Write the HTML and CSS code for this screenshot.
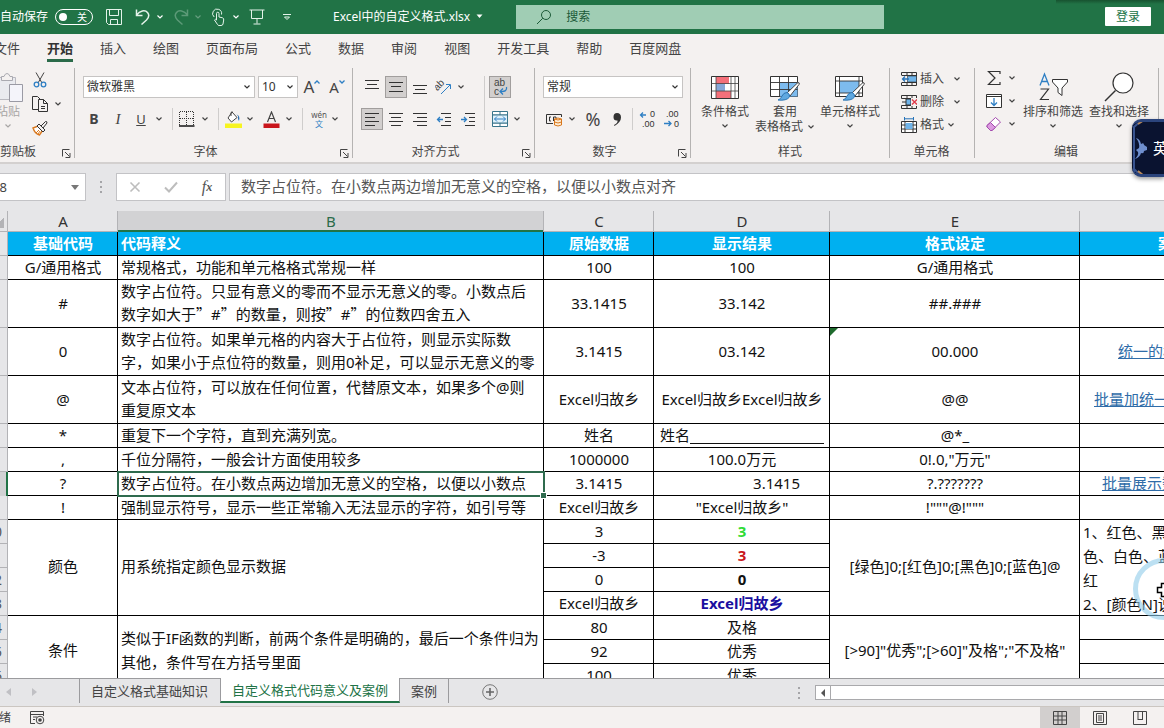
FILE: index.html
```html
<!DOCTYPE html>
<html lang="zh-CN">
<head>
<meta charset="utf-8">
<title>Excel中的自定义格式.xlsx</title>
<link rel="stylesheet" href="styles.css">
</head>
<body>
<svg class="defs" aria-hidden="true">
  <symbol id="chev" viewBox="0 0 8 8"><path d="M1.500 2.500 4 5l2.500-2.500" fill="none" stroke="currentColor" stroke-width="1.200"/></symbol>
  <symbol id="launch" viewBox="0 0 9 9"><path d="M.5 7.500V.5H7.500M3 3l4.500 4.500M8 4v4.500H3.500" fill="none" stroke="#444"/></symbol>
</svg>

<header class="titlebar">
  <label class="autosave">自动保存<input type="checkbox" class="hidden-check"><span class="toggle"><i></i>关</span></label>
  <button class="tb w22" aria-label="保存"><svg width="18" height="18" viewBox="0 0 18 18"><path d="M1.500 1.500h15v15h-13l-2-2zM4.500 1.500v6h9v-6M5.500 16.500v-5h7v5" /></svg></button>
  <button class="tb w36" aria-label="撤消"><svg width="16" height="18" viewBox="0 0 16 18"><path stroke-width="1.500" d="M1.500 1.500v6h6M1.500 7C5 2.500 10 1.500 12.500 4.500s1.500 5-1 7.500l-5 4.500"/></svg><svg class="chev"><use href="#chev"/></svg></button>
  <button class="tb w36 dim" aria-label="恢复"><svg width="16" height="18" viewBox="0 0 16 18"><path stroke-width="1.500" d="M14.500 1.500v6h-6M14.500 7C11 2.500 6 1.500 3.500 4.500s-1.500 5 1 7.500l5 4.500"/></svg><svg class="chev"><use href="#chev"/></svg></button>
  <button class="tb w36" aria-label="触摸模式"><svg width="16" height="18" viewBox="0 0 16 18"><path d="M3.200 9A4.500 4.500 0 1 1 10.500 6.500M5.500 12V5.500a1.200 1.200 0 0 1 2.500 0V9l3.500.8q1.500.4 1.200 2.200l-.7 4q-.3 1.500-2 1.500H8q-1 0-1.500-1L3.500 12q1-1.500 2 0z"/></svg><svg class="chev"><use href="#chev"/></svg></button>
  <button class="tb w22" aria-label="放映"><svg width="16" height="18" viewBox="0 0 16 18"><path d="M.5 2h15M2.500 2v8.500h11V2M8 10.500v5M4.500 16h7"/></svg></button>
  <button class="tb w30" aria-label="自定义工具栏"><svg width="10" height="8" viewBox="0 0 10 8"><path d="M1 1.500h8M2.500 4 5 6.500 7.500 4z"/></svg></button>
  <button class="doc">Excel中的自定义格式.xlsx<svg width="7" height="5" viewBox="0 0 7 5"><path d="M.5.500h6l-3 3.500z" fill="#fff"/></svg></button>
  <label class="search"><svg width="16" height="16" viewBox="0 0 16 16"><circle cx="10" cy="6" r="4.500" fill="none" stroke="#1c5a38"/><path d="M6.800 9.200 1 15" stroke="#1c5a38"/></svg><input type="text" placeholder="搜索" aria-label="搜索"></label>
  <button class="login">登录</button>
</header>

<nav class="tabs">
  <a href="#">文件</a><a href="#" class="on">开始</a><a href="#">插入</a><a href="#">绘图</a><a href="#">页面布局</a><a href="#">公式</a><a href="#">数据</a><a href="#">审阅</a><a href="#">视图</a><a href="#">开发工具</a><a href="#">帮助</a><a href="#">百度网盘</a>
</nav>

<section class="ribbon">
  <div class="group g-clip">
    <div class="body">
      <button class="big paste"><svg width="30" height="30" viewBox="0 0 30 30"><path d="M22.500 12V5.500h-19v22h13" fill="#e9eaef" stroke="#b9b9c0"/><path d="M8.500 8.500v-4H11q1-3 3-3t3 3h2.500v4z" fill="#f4f1f0" stroke="#a9a9b0"/><path d="M16.500 12.500h13v17h-13z" fill="#f4f4fa" stroke="#9a9aa4"/></svg><span>粘贴</span><svg class="chev"><use href="#chev"/></svg></button>
      <div class="stack">
        <button aria-label="剪切"><svg width="16" height="18" viewBox="0 0 16 18"><path d="M4 1.500 10 12M12 1.500 6 12" fill="none" stroke="#444"/><circle cx="4.500" cy="13.500" r="2.300" fill="none" stroke="#2e7fc4" stroke-width="1.300"/><circle cx="11.500" cy="13.500" r="2.300" fill="none" stroke="#2e7fc4" stroke-width="1.300"/></svg></button>
        <button aria-label="复制"><svg width="16" height="18" viewBox="0 0 16 18"><path d="M6 14.500H.5v-13h5L8 4M6.500 4.500h5l4 4v8h-9zM11.500 4.500v4h4M9 11.500h4M9 13.500h4" fill="none" stroke="#333"/></svg><svg class="chev"><use href="#chev"/></svg></button>
        <button aria-label="格式刷"><svg width="16" height="16" viewBox="0 0 16 16"><path d="m1 8 5-2 4.500 4.500-3 4.500Q3 14 1 8z" fill="#fff" stroke="#d9781e" stroke-width="1.400"/><path d="M4 13l3-3M6 14l2-3" stroke="#d9781e"/><path d="m5 6 2-2 6 6-2 2zM9 6l4.500-4.500q1.500-.5 1.500 1.500L11 8" fill="#f4f1f0" stroke="#333"/></svg></button>
      </div>
    </div>
    <div class="cap">剪贴板<svg class="launch"><use href="#launch"/></svg></div>
  </div>

  <div class="group g-font">
    <div class="body rows">
      <div class="row">
        <div class="combo wide"><select aria-label="字体"><option>微软雅黑</option></select><svg class="chev"><use href="#chev"/></svg></div>
        <div class="combo size"><select aria-label="字号"><option>10</option></select><svg class="chev"><use href="#chev"/></svg></div>
        <button class="w22 grow">A<svg width="6" height="4" viewBox="0 0 6 4"><path d="M.5 3.500 3 1l2.500 2.500" fill="none" stroke="#2e7fc4" stroke-width="1.300"/></svg></button>
        <button class="w22 grow small">A<svg width="6" height="4" viewBox="0 0 6 4"><path d="M.5.500 3 3 5.500.500" fill="none" stroke="#2e7fc4" stroke-width="1.300"/></svg></button>
      </div>
      <div class="row tight">
        <button class="w22 b">B</button><button class="w26 i">I</button><button class="w20 u">U</button><button class="w16" aria-label="下划线选项"><svg class="chev"><use href="#chev"/></svg></button>
        <span class="sep w10"></span>
        <button class="w20" aria-label="边框"><svg width="16" height="16" viewBox="0 0 16 16"><path d="M1 .5h14M1 7.500h14M.5 1v13M7.500 1v13M14.500 1v13" stroke="#333" stroke-dasharray="1 1"/><path d="M0 15h15.500" stroke="#222" stroke-width="1.600"/></svg></button><button class="w16" aria-label="边框选项"><svg class="chev"><use href="#chev"/></svg></button>
        <span class="sep w10"></span>
        <button class="w20" aria-label="填充颜色"><svg width="17" height="17" viewBox="0 0 17 17"><path d="m7 1 5 5.500-5.500 4.500-3.500-4z" fill="#fff" stroke="#444"/><path d="M6 5V1.500q1-1.500 2 0" fill="none" stroke="#444"/><path d="M11.500 3.500q4 1 2.500 6.500-1.500-2-1-5z" fill="#2e6fb0"/><path d="M0 12.500h17V17H0z" fill="#f7f420"/></svg></button><button class="w14" aria-label="填充选项"><svg class="chev"><use href="#chev"/></svg></button>
        <button class="w28" aria-label="字体颜色"><svg width="17" height="17" viewBox="0 0 17 17"><path d="M4.500 11 8.500 1 12.500 11M6 7.500h5" fill="none" stroke="#444" stroke-width="1.200"/><path d="M.5 12.500h16V17H.5z" fill="#c9151b"/></svg></button><button class="w8" aria-label="字体颜色选项"><svg class="chev"><use href="#chev"/></svg></button>
        <span class="sep w18"></span>
        <button class="w16 pinyin"><span>wén</span><b>文</b></button><button class="w16" aria-label="拼音选项"><svg class="chev"><use href="#chev"/></svg></button>
      </div>
    </div>
    <div class="cap">字体<svg class="launch"><use href="#launch"/></svg></div>
  </div>

  <div class="group g-align">
    <div class="body align">
      <button aria-label="顶端对齐"><svg width="16" height="16" viewBox="0 0 16 16"><path d="M1 1.500h14M3 5.500h10M1 9.500h14" stroke="#333"/></svg></button>
      <button class="sel" aria-label="垂直居中"><svg width="16" height="16" viewBox="0 0 16 16"><path d="M1 3.500h14M3 7.500h10M1 12.500h14" stroke="#333"/></svg></button>
      <button aria-label="底端对齐"><svg width="16" height="16" viewBox="0 0 16 16"><path d="M1 6.500h14M3 10.500h10M1 14.500h14" stroke="#333"/></svg></button>
      <button aria-label="方向"><svg width="18" height="18" viewBox="0 0 18 18"><text x="0" y="10" class="ab" transform="rotate(-45 5 9)">ab</text><path d="m6 16 9-9M11 6.500h4.500V11" fill="none" stroke="#2e7fc4"/></svg></button>
      <button class="start" aria-label="方向选项"><svg class="chev"><use href="#chev"/></svg></button>
      <span class="sep tall"></span>
      <button class="sel" aria-label="自动换行"><svg width="18" height="20" viewBox="0 0 18 20"><text x="3" y="9" class="ab">ab</text><text x="3" y="18" class="ab">c</text><path d="M15.500 10q1 5-6 4.500M12 11.500l-3 3 3 3" fill="none" stroke="#2e7fc4" stroke-width="1.300"/></svg></button>
      <span></span>
      <button class="sel" aria-label="左对齐"><svg width="16" height="16" viewBox="0 0 16 16"><path d="M1 2.500h14M1 6.500h10M1 10.500h14M1 14.500h10" stroke="#333"/></svg></button>
      <button aria-label="居中"><svg width="16" height="16" viewBox="0 0 16 16"><path d="M1 2.500h14M3 6.500h10M1 10.500h14M3 14.500h10" stroke="#333"/></svg></button>
      <button aria-label="右对齐"><svg width="16" height="16" viewBox="0 0 16 16"><path d="M1 2.500h14M5 6.500h10M1 10.500h14M5 14.500h10" stroke="#333"/></svg></button>
      <button aria-label="减少缩进"><svg width="16" height="16" viewBox="0 0 16 16"><path d="M5 2.500h10M9 6.500h6M9 10.500h6M5 14.500h10" stroke="#333"/><path d="M7 8.500H1.500M4 6 1.500 8.500 4 11" fill="none" stroke="#2e7fc4" stroke-width="1.300"/></svg></button>
      <button aria-label="增加缩进"><svg width="16" height="16" viewBox="0 0 16 16"><path d="M5 2.500h10M9 6.500h6M9 10.500h6M5 14.500h10" stroke="#333"/><path d="M1 8.500h5.500M4 6l2.500 2.500L4 11" fill="none" stroke="#2e7fc4" stroke-width="1.300"/></svg></button>
      <button aria-label="合并后居中"><svg width="16" height="16" viewBox="0 0 16 16"><path d="M.5.500h15v15H.5zM.5 4h15M.5 12h15M8 .5V4M8 12v3.500" fill="#fff" stroke="#39758c"/><path d="M.5 4h15v8H.5z" fill="#dff1fb" stroke="#39758c"/><path d="M2.500 8h11M5 5.500 2.500 8 5 10.500M11 5.500 13.500 8 11 10.500" fill="none" stroke="#2e7fc4"/></svg></button>
      <button class="start" aria-label="合并选项"><svg class="chev"><use href="#chev"/></svg></button>
    </div>
    <div class="cap">对齐方式<svg class="launch"><use href="#launch"/></svg></div>
  </div>

  <div class="group g-num">
    <div class="body rows">
      <div class="row"><div class="combo full"><select aria-label="数字格式"><option>常规</option></select><svg class="chev"><use href="#chev"/></svg></div></div>
      <div class="row tight">
        <button class="w22" aria-label="会计数字格式"><svg width="16" height="16" viewBox="0 0 16 16"><path d="M7 12.500H.5v-9h15V6" fill="none" stroke="#333"/><path d="M5 6H3.500v4H5M7.500 10V6H10v1" fill="none" stroke="#333"/><path d="M8.500 8v6q3.500 2 7 0V8q-3.500-2-7 0zM8.500 8q3.500 2 7 0M8.500 11q3.500 2 7 0" fill="#fdebd3" stroke="#d9781e"/></svg></button><button class="w14" aria-label="会计选项"><svg class="chev"><use href="#chev"/></svg></button>
        <button class="w28 pct">%</button>
        <button class="w20" aria-label="千位分隔"><svg width="8" height="13" viewBox="0 0 8 13"><path d="M4 0q4 0 4 4.500T1.500 13L1 12q4-2 3.500-4.500Q.5 8 .5 4T4 0z" fill="#333"/></svg></button>
        <span class="sep w10"></span>
        <button class="w22" aria-label="增加小数位"><svg width="18" height="20" viewBox="0 0 18 20"><path d="M7 6H1.500M4 3.500 1.500 6 4 8.500" fill="none" stroke="#2e7fc4" stroke-width="1.300"/><text x="11" y="8" class="dec">0</text><text x="3" y="18" class="dec">.00</text></svg></button>
        <button class="w26" aria-label="减少小数位"><svg width="18" height="20" viewBox="0 0 18 20"><text x="3" y="8" class="dec">.00</text><path d="M1 14.500h7M5.500 12 8 14.500 5.500 17" fill="none" stroke="#2e7fc4" stroke-width="1.300"/><text x="11" y="18" class="dec">0</text></svg></button>
      </div>
    </div>
    <div class="cap">数字<svg class="launch"><use href="#launch"/></svg></div>
  </div>

  <div class="group g-style">
    <div class="body">
      <button class="big w60"><svg width="30" height="28" viewBox="0 0 30 28"><path d="M1.500 3.500h27v22h-27z" fill="#fff" stroke="#333"/><path d="M6 4h13v7H6zM6 18h15v7H6z" fill="#f4707a"/><path d="M6 11h9v7H6z" fill="#86a7d8"/><path d="M1.500 10.500h27M1.500 18h27M6 3.500v22M21 3.500v22M25 3.500v22" stroke="#444" stroke-width=".8"/></svg><span>条件格式</span><svg class="chev"><use href="#chev"/></svg></button>
      <button class="big w60"><svg width="32" height="28" viewBox="0 0 32 28"><path d="M1.500 3.500h27v20h-27z" fill="#fff" stroke="#333"/><path d="M11 9h17.500v14.500H11z" fill="#7dbbee"/><path d="M1.500 9.500h27M1.500 16.500h27M10.500 3.500v20M19.500 3.500v20" stroke="#333" stroke-width=".9"/><path d="M29 9.500q2 0 1 2L21 23l-3-3z" fill="#fff" stroke="#444"/><path d="M18 19.500q3 1 2.500 4.500-3 4-11.500 3 3-1 4-4 1.500-3.500 5-3.500z" fill="#5fa8e0" stroke="#2d76b4"/></svg><span>套用</span><span class="ln">表格格式<svg class="chev"><use href="#chev"/></svg></span></button>
      <button class="big w70"><svg width="32" height="28" viewBox="0 0 32 28"><path d="M1.500 3.500h27v20h-27z" fill="#fff" stroke="#333"/><path d="M6 8h19v12H6z" fill="#7dbbee"/><path d="M1.500 8h27M1.500 20h27M5.500 3.500v20M25 3.500v20" stroke="#333" stroke-width=".9"/><path d="M29 9.500q2 0 1 2L21 23l-3-3z" fill="#fff" stroke="#444"/><path d="M18 19.500q3 1 2.500 4.500-3 4-11.500 3 3-1 4-4 1.500-3.500 5-3.500z" fill="#5fa8e0" stroke="#2d76b4"/></svg><span>单元格样式</span><svg class="chev"><use href="#chev"/></svg></button>
    </div>
    <div class="cap">样式</div>
  </div>

  <div class="group g-cell">
    <div class="body list">
      <button><svg width="16" height="16" viewBox="0 0 16 16"><path d="M.5 4V1.500h15v13H.5V12M6 1.500V5M11 1.500v13M6 11v3.500M.5 11.500h15M.5 4.500h15" fill="none" stroke="#333"/><path d="M6.500 5h9v6h-9z" fill="#6fb4ea" stroke="#333" stroke-width=".6"/><path d="M0 5h6v6H0z" fill="#f4f1f0"/><path d="M8 8H1.500M4 5.500 1.500 8 4 10.500" fill="none" stroke="#2673b8" stroke-width="1.300"/></svg><span>插入</span><svg class="chev far"><use href="#chev"/></svg></button>
      <button><svg width="16" height="16" viewBox="0 0 16 16"><path d="M.5 4.500v-3h15v3H.5zM.5 14.500v-3h15v3zM6 1.500v13M11 1.500v3M11 11.500v3" fill="none" stroke="#333"/><path d="M5 5h5v6H5z" fill="#6fb4ea" stroke="#333"/><path d="M10 4h6v8h-6z" fill="#f4f1f0"/><path d="m11 5.500 5 5M16 5.500l-5 5" stroke="#e03a4a" stroke-width="1.400"/><path d="M1 8h4" stroke="#333"/></svg><span>删除</span><svg class="chev far"><use href="#chev"/></svg></button>
      <button><svg width="16" height="16" viewBox="0 0 16 16"><path d="M.5 4.500h15v11H.5zM4 4.500v11M12 4.500v11M.5 8h15M.5 12h15" fill="#fff" stroke="#333"/><path d="M4.500 6h7v6h-7z" fill="#6fb4ea"/><path d="M3.500 0v3.500M12.500 0v3.500M3.500 1.800h9" fill="none" stroke="#2673b8"/></svg><span>格式</span><svg class="chev"><use href="#chev"/></svg></button>
    </div>
    <div class="cap">单元格</div>
  </div>

  <div class="group g-edit">
    <div class="body">
      <div class="list short">
        <button aria-label="求和"><svg width="16" height="16" viewBox="0 0 16 16"><path d="M14 4V1.500H2.500L9 8l-6.500 6.500H14V12" fill="none" stroke="#333" stroke-width="1.200"/></svg><svg class="chev"><use href="#chev"/></svg></button>
        <button aria-label="填充"><svg width="16" height="16" viewBox="0 0 16 16"><path d="M.5 1.500h15v13H.5zM.5 3.500h15" fill="#fff" stroke="#333"/><path d="M8 5v7.500M5 9.500l3 3 3-3" fill="none" stroke="#2e7fc4" stroke-width="1.300"/></svg><svg class="chev"><use href="#chev"/></svg></button>
        <button aria-label="清除"><svg width="16" height="16" viewBox="0 0 16 16"><path d="M9.500 1.500 14.500 6 6 14.500H4.500L1 11V9.500z" fill="#fff" stroke="#a34aae"/><path d="m4.500 6.500 5 5-3.500 3H4.500L1 11V9.500z" fill="#dc9be0" stroke="#a34aae"/></svg><svg class="chev"><use href="#chev"/></svg></button>
      </div>
      <button class="big w66"><svg width="32" height="30" viewBox="0 0 32 30"><path d="M3 13.500 7.500 2 12 13.500M4.500 9.500h6" fill="none" stroke="#2e7fc4" stroke-width="1.300"/><path d="M3.500 17h8l-8 10.500H12" fill="none" stroke="#333" stroke-width="1.200"/><path d="M15.500 7.500h15V10l-5.500 6v7.500l-4-3V16l-5.500-6z" fill="#fff" stroke="#333"/></svg><span>排序和筛选</span><svg class="chev"><use href="#chev"/></svg></button>
      <button class="big w66"><svg width="32" height="30" viewBox="0 0 32 30"><circle cx="20" cy="11" r="10" fill="#fff" stroke="#333" stroke-width="1.200"/><path d="M12.500 18.500 2 29" stroke="#333" stroke-width="1.400"/></svg><span>查找和选择</span><svg class="chev"><use href="#chev"/></svg></button>
    </div>
    <div class="cap">编辑</div>
  </div>
</section>

<section class="formula">
  <label class="namebox"><input type="text" value="B8" aria-label="名称框"><svg width="8" height="5" viewBox="0 0 8 5"><path d="M0 0h8L4 5z" fill="#777"/></svg></label>
  <span class="dots"><i></i><i></i><i></i></span>
  <div class="fx">
    <button aria-label="取消"><svg width="12" height="12" viewBox="0 0 12 12"><path d="m1.500 1.500 9 9M10.500 1.500l-9 9" stroke="#bdbdbd" stroke-width="1.600"/></svg></button>
    <button aria-label="输入"><svg width="14" height="12" viewBox="0 0 14 12"><path d="m1 6.500 4 4 8-9" fill="none" stroke="#bdbdbd" stroke-width="2"/></svg></button>
    <button class="fxb"><em>f</em><small>x</small></button>
  </div>
  <input class="finput" type="text" aria-label="编辑栏" value="数字占位符。在小数点两边增加无意义的空格，以便以小数点对齐">
</section>

<main class="sheet">
  <table>
    <colgroup><col class="c0"><col class="ca"><col class="cb"><col class="cc"><col class="cd"><col class="ce"><col></colgroup>
    <thead><tr><th class="corner"></th><th>A</th><th class="cur">B</th><th>C</th><th>D</th><th>E</th><th></th></tr></thead>
    <tbody>
      <tr class="hd"><th>1</th><td>基础代码</td><td class="l">代码释义</td><td>原始数据</td><td>显示结果</td><td>格式设定</td><td class="f f-hd">案例展示</td></tr>
      <tr><th>2</th><td>G/通用格式</td><td class="l">常规格式，功能和单元格格式常规一样</td><td>100</td><td>100</td><td>G/通用格式</td><td></td></tr>
      <tr class="two"><th>3</th><td>#</td><td class="l">数字占位符。只显有意义的零而不显示无意义的零。小数点后<br>数字如大于<q>”</q>#<q>”</q>的数量，则按<q>”</q>#<q>”</q>的位数四舍五入</td><td>33.1415</td><td>33.142</td><td>##.###</td><td></td></tr>
      <tr class="two"><th>4</th><td>0</td><td class="l">数字占位符。如果单元格的内容大于占位符，则显示实际数<br>字，如果小于点位符的数量，则用0补足，可以显示无意义的零</td><td>3.1415</td><td>03.142</td><td class="warn">00.000</td><td class="f f-a"><a href="#">统一的格式</a></td></tr>
      <tr class="two"><th>5</th><td>@</td><td class="l">文本占位符，可以放在任何位置，代替原文本，如果多个@则<br>重复原文本</td><td>Excel归故乡</td><td>Excel归故乡Excel归故乡</td><td>@@</td><td class="f f-b"><a href="#">批量加统一前缀</a></td></tr>
      <tr><th>6</th><td>*</td><td class="l">重复下一个字符，直到充满列宽。</td><td>姓名</td><td class="fill"><div>姓名<span></span></div></td><td>@*_</td><td></td></tr>
      <tr><th>7</th><td>,</td><td class="l">千位分隔符，一般会计方面使用较多</td><td>1000000</td><td>100.0万元</td><td>0!.0,"万元"</td><td></td></tr>
      <tr><th class="cur">8</th><td>?</td><td class="l active">数字占位符。在小数点两边增加无意义的空格，以便以小数点</td><td>3.1415</td><td class="r">3.1415</td><td>?.???????</td><td class="f f-c"><a href="#">批量展示数据</a></td></tr>
      <tr><th>9</th><td>!</td><td class="l">强制显示符号，显示一些正常输入无法显示的字符，如引号等</td><td>Excel归故乡</td><td>"Excel归故乡"</td><td>!"""@!"""</td><td></td></tr>
      <tr><th>10</th><td class="span" rowspan="4">颜色</td><td class="l span" rowspan="4">用系统指定颜色显示数据</td><td>3</td><td class="green">3</td><td class="span" rowspan="4">[绿色]0;[红色]0;[黑色]0;[蓝色]@</td><td class="f note" rowspan="4">1、红色、黑色、<br>色、白色、蓝色<br>红<br>2、[颜色N]说明</td></tr>
      <tr><th>11</th><td>-3</td><td class="red">3</td></tr>
      <tr><th>12</th><td>0</td><td class="bold">0</td></tr>
      <tr><th>13</th><td>Excel归故乡</td><td class="blue">Excel归故乡</td></tr>
      <tr><th>14</th><td class="span" rowspan="3">条件</td><td class="l span" rowspan="3">类似于IF函数的判断，前两个条件是明确的，最后一个条件归为<br>其他，条件写在方括号里面</td><td>80</td><td>及格</td><td class="span" rowspan="3">[&gt;90]"优秀";[&gt;60]"及格";"不及格"</td><td></td></tr>
      <tr><th>15</th><td>92</td><td>优秀</td><td></td></tr>
      <tr><th>16</th><td>100</td><td>优秀</td><td></td></tr>
    </tbody>
  </table>
</main>

<nav class="sheetbar">
  <button class="arrow" aria-label="上一张"><svg width="5" height="8" viewBox="0 0 5 8"><path d="M5 0v8L0 4z" fill="#c0c0c4"/></svg></button>
  <button class="arrow" aria-label="下一张"><svg width="5" height="8" viewBox="0 0 5 8"><path d="M0 0v8l5-4z" fill="#c0c0c4"/></svg></button>
  <button class="st first">自定义格式基础知识</button><button class="st act">自定义格式代码意义及案例</button><button class="st last">案例</button>
  <button class="plus" aria-label="新工作表"><svg width="16" height="16" viewBox="0 0 16 16"><circle cx="8" cy="8" r="7.300" fill="none" stroke="#777"/><path d="M8 4v8M4 8h8" stroke="#666" stroke-width="1.600"/></svg></button>
  <span class="dots"><i></i><i></i><i></i></span>
  <div class="scroll"><button aria-label="向左滚动"><svg width="4" height="8" viewBox="0 0 4 8"><path d="M4 0v8L0 4z" fill="#555"/></svg></button></div>
</nav>

<footer class="status">
  <span class="ready">就绪</span>
  <button class="rec" aria-label="录制宏"><svg width="15" height="14" viewBox="0 0 15 14"><path d="M5 12.500H.5V.5h13V5M.5 3.500h13M3 6h4M3 8.500h2" fill="none" stroke="#444"/><circle cx="10" cy="9" r="3.800" fill="#f4f1f0" stroke="#444"/><circle cx="10" cy="9" r="1.800" fill="#444"/></svg></button>
  <div class="views">
    <button class="on" aria-label="普通"><svg width="14" height="14" viewBox="0 0 14 14"><path d="M.5.500h13v13H.5zM.5 5h13M.5 9h13M5 .5v13M9 .5v13" fill="none" stroke="#444"/></svg></button>
    <button aria-label="页面布局"><svg width="14" height="14" viewBox="0 0 14 14"><path d="M.5.500h13v13H.5zM3.500 2.500h7v9h-7zM5 5h4M5 7h4M5 9h4" fill="none" stroke="#444"/></svg></button>
    <button class="pb" aria-label="分页预览"><svg width="14" height="14" viewBox="0 0 14 14"><path d="M.5.500h13v13H.5zM5 .5v8.500M9.500 .5v8.500M5 8.500h4.500" fill="none" stroke="#444"/></svg></button>
  </div>
</footer>

<div class="ime"><svg width="16" height="58" viewBox="0 0 16 58"><path d="M2 54V8l8-7M2 50l7 7" fill="none" stroke="#38538f" stroke-width="2"/><path d="M4 19q4 1 5 6 3-2 3 1l3 2v3l-3 1q0 3-3 2-1 4-6 6 4-4 3-7l-2-2 3-2q1-5-3-10z" fill="#6f8fce"/><path d="m6 5 6-4M6 52l6 5" stroke="#b98a5a" stroke-width="2"/></svg><span>英</span></div>
<div class="ring"></div>
<svg class="cross" width="16" height="16" viewBox="0 0 16 16"><path d="M5.500 1.500h5v4h4v5h-4v4h-5v-4h-4v-5h4z" fill="#fff" stroke="#000" stroke-width="1.500"/></svg>
</body>
</html>
```
FILE: styles.css
```css
* { box-sizing: border-box; }
body {
  margin: 0;
  height: 100vh;
  display: flex;
  flex-direction: column;
  position: relative;
  overflow: hidden;
  background: #f4f1f0;
  color: #444;
  font: 12px/16px "Noto Sans", "Noto Sans CJK SC", sans-serif;
}
button, input, select { font: inherit; color: inherit; border: 0; padding: 0; margin: 0; background: none; }
button { display: flex; align-items: center; justify-content: center; white-space: nowrap; }
a { color: inherit; text-decoration: none; }
svg { display: block; flex: none; }
.defs { position: absolute; width: 0; height: 0; }
.chev { width: 8px; height: 8px; }
.w8 { width: 8px; } .w10 { width: 10px; } .w14 { width: 14px; } .w16 { width: 16px; } .w18 { width: 18px; }
.w20 { width: 20px; } .w22 { width: 22px; } .w26 { width: 26px; } .w28 { width: 28px; } .w30 { width: 30px; }
.w36 { width: 36px; } .w60 { width: 60px; } .w66 { width: 66px; } .w70 { width: 70px; }

/* title bar */
.titlebar { height: 34px; flex: none; display: flex; align-items: center; padding-bottom: 1px; background: linear-gradient(#175230, #217346) right top / 108px 4px no-repeat #217346; color: #fff; }
.autosave { display: flex; align-items: center; gap: 7px; margin-right: 10px; }
.hidden-check { position: absolute; opacity: 0; }
.toggle { width: 38px; height: 16px; border: 1px solid #fff; border-radius: 8px; display: flex; align-items: center; justify-content: space-between; padding: 0 5px 0 3px; font-size: 10px; }
.toggle i { width: 8px; height: 8px; border-radius: 50%; background: #fff; }
.tb { height: 24px; }
.tb path { fill: none; stroke: #e4f3ea; }
.tb.w22 + .tb.w36 { margin-left: 10px; }
.tb.w36 { justify-content: flex-start; gap: 5px; margin-right: 2px; }
.tb.w36 + .tb.w22 { margin-left: -3px; }
.tb.w30 { margin-left: 4px; }
.dim { opacity: .3; }
.doc { gap: 6px; margin-left: 31px; }
.search { flex: 0 1 368px; height: 24px; margin-left: 33px; padding-left: 20px; display: flex; align-items: center; gap: 14px; background: #a0cdb4; color: #1c5a38; }
.search input { flex: 1; min-width: 0; outline: 0; }
.search input::placeholder { color: #1c5a38; opacity: 1; }
.login { margin: 0 13px 0 auto; width: 46px; height: 19px; background: #fff; color: #217346; border-radius: 1px; }

/* ribbon tabs */
.tabs { flex: none; display: flex; gap: 27px; margin-left: -6px; height: 32px; font-size: 13px; line-height: 20px; padding-top: 4px; white-space: nowrap; }
.tabs a { height: 24px; }
.tabs .on { font-weight: 700; color: #333; border-bottom: 3px solid #2b6b4a; }

/* ribbon groups */
.ribbon { flex: none; display: flex; height: 98px; padding: 2px 0 4px; border-bottom: 2px solid #d3d0cf; }
.group { display: flex; flex-direction: column; border-right: 1px solid #b5b3b2; flex: none; }
.g-clip { width: 75px; }
.g-font { width: 278px; padding-left: 8px; }
.g-align { width: 182px; padding-left: 8px; }
.g-num { width: 156px; padding-left: 8px; }
.g-style { width: 199px; padding-left: 4px; }
.g-cell { width: 85px; padding-left: 11px; }
.g-edit { width: 184px; padding-left: 11px; }
.body { flex: 1; display: flex; }
.cap { position: relative; height: 18px; line-height: 24px; padding-right: 12px; text-align: center; flex: none; }
.g-font .cap, .g-align .cap, .g-num .cap { padding-right: 24px; }
.g-style .cap { padding-right: 4px; }
.g-clip .cap { text-align: left; }
.launch { position: absolute; right: 3px; bottom: 0; width: 9px; height: 9px; }
.rows { flex-direction: column; gap: 10px; padding-top: 8px; }
.row { display: flex; align-items: center; height: 22px; gap: 3px; }
.row.tight { gap: 0; }
.row.tight button { height: 22px; }
.combo { display: flex; align-items: center; height: 22px; border: 1px solid #c6c4c3; background: #fff; padding: 0 3px 0 3px; color: #333; }
.combo select { flex: 1; min-width: 0; appearance: none; height: 20px; }
.combo.wide { width: 172px; } .combo.size { width: 40px; } .combo.full { width: 140px; }
.sep { align-self: stretch; background: linear-gradient(#cfcdcc, #cfcdcc) center / 1px 100% no-repeat; }
.grow { font-size: 17px; align-items: flex-start; line-height: 22px; }
.grow svg { margin-top: 4px; }
.grow.small { font-size: 15px; }
.b { font-weight: 700; font-size: 14px; }
.i { font: italic 15px "Liberation Serif", serif; }
.u { text-decoration: underline; font-size: 13px; }
.pinyin { flex-direction: column; font-size: 8px; line-height: 9px; color: #555; }
.pinyin b { font-weight: 400; color: #2e7fc4; }
.pct { font-size: 18px; }
.ab { font: 10px "Liberation Sans", sans-serif; fill: #444; }
.dec { font: 9px "Liberation Sans", sans-serif; fill: #333; }
.align { display: grid; grid-template-columns: 22px 22px 22px 22px 22px 6px 22px 12px; grid-auto-rows: 22px; gap: 10px 2px; padding-top: 8px; }
.align .start { justify-content: flex-start; }
.tall { grid-area: 1 / 6 / 3 / 7; }
.sel { background: #d2cfce; border: 1px solid #a19e9d; }
.big { flex-direction: column; justify-content: flex-start; padding-top: 4px; line-height: 15px; }
.big > svg:first-child { height: 30px; margin-bottom: 2px; }
.big > .chev { margin-top: 3px; }
.ln { display: flex; align-items: center; gap: 4px; }
.paste { width: 30px; margin-left: -7px; color: #a8a6a5; }
.stack { display: flex; flex-direction: column; padding: 2px 0 0 9px; gap: 4px; }
.stack button { height: 20px; gap: 6px; justify-content: flex-start; }
.list { display: flex; flex-direction: column; gap: 3px; padding-top: 1px; }
.list button { height: 20px; gap: 3px; justify-content: flex-start; }
.far { margin-left: 6px; }
.short { width: 34px; padding-top: 0; }
.short button { gap: 6px; }

/* formula bar */
.formula { flex: none; display: flex; height: 47px; padding: 9px 0 10px; background: #e6e6e8; }
.namebox { width: 86px; border: 1px solid #c3c3c6; border-left: 0; background: #fff; display: flex; align-items: center; padding-right: 6px; }
.namebox input { flex: 1; min-width: 0; margin-left: -9px; font-size: 13px; }
.dots { width: 30px; display: flex; flex-direction: column; align-items: center; justify-content: center; gap: 3px; }
.dots i { width: 2px; height: 2px; background: #a5a5a8; }
.fx { width: 110px; border: 1px solid #c3c3c6; background: #fff; display: flex; margin-right: 3px; }
.fx button { flex: 1; }
.fxb { color: #555; }
.fxb em { font: italic 16px "Liberation Serif", serif; }
.fxb small { font: italic 700 12px "Liberation Serif", serif; }
.finput { flex: 1; min-width: 0; border: 1px solid #c3c3c6; border-right: 0; background: #fff; padding: 0 0 2px 11px; font-size: 15px; color: #555; }

/* grid */
.sheet { flex: 1; min-height: 0; overflow: hidden; background: #fff; }
table { table-layout: fixed; width: calc(100% + 30px); margin-left: -20px; border-collapse: separate; border-spacing: 0; font-size: 15px; line-height: 22px; color: #111; }
.c0 { width: 28px; } .ca, .cc { width: 110px; } .cb { width: 426px; } .cd { width: 176px; } .ce { width: 250px; }
th { font-weight: 400; padding: 0; background: #e6e6e8; }
thead th { height: 21px; line-height: 21px; color: #333; box-shadow: inset -1px -1px 0 #b3b3b6; }
thead .cur { background: #d2d2d4; color: #2b6b4a; box-shadow: inset -1px 0 0 #b3b3b6, inset 0 -2px 0 #217346; }
.corner { background: linear-gradient(135deg, transparent 50%, #b3b3b6 50%) 13px 6px / 11px 11px no-repeat #e6e6e8; }
tbody th { font-size: 14px; color: #555; box-shadow: inset -1px -1px 0 #b3b3b6; }
tbody th.cur { background: #d2d2d4; box-shadow: inset -2px 0 0 #217346; }
td { position: relative; height: 24px; padding: 0 0 2px; text-align: center; white-space: nowrap; box-shadow: inset -1px -1px 0 #000; }
.two td { height: 48px; }
.two .l { line-height: 23px; }
.span { padding-bottom: 4px; line-height: 24px; }
.l { text-align: left; padding-left: 3px; }
.f { text-align: left; padding-left: 3px; overflow: hidden; }
.note { line-height: 24px; padding-bottom: 0; }
.f a { color: #2f6ca8; text-decoration: underline; }
.f-hd { padding-left: 78px; } .f-a { padding-left: 38px; } .f-b { padding-left: 14px; } .f-c { padding-left: 22px; }
.hd td { background: #00b0f0; color: #fff; font-weight: 700; }
q { quotes: none; font-family: "Noto Sans CJK SC", sans-serif; line-height: 0; }
.warn::before { content: ""; position: absolute; left: 0; top: 0; border-top: 8px solid #1f6b2e; border-right: 8px solid transparent; }
.fill div { display: flex; padding: 0 6px; }
.fill span { flex: 1; border-bottom: 1px solid #111; margin-bottom: 2px; }
.r { text-align: right; padding-right: 30px; }
.green { color: #2fdc35; font-weight: 700; }
.red { color: #c9151b; font-weight: 700; }
.bold { font-weight: 700; }
.blue { color: #1a0fa0; font-weight: 700; }
.active::before { content: ""; position: absolute; inset: -1px; border: 2px solid #2f6b4e; z-index: 1; }
.active::after { content: ""; position: absolute; right: -2px; bottom: -2px; width: 5px; height: 5px; background: #2f6b4e; outline: 1px solid #fff; z-index: 2; }

/* sheet tabs */
.sheetbar { flex: none; display: flex; align-items: stretch; height: 28px; background: #e6e6e8; border-top: 1px solid #9b9b9e; font-size: 13px; }
.arrow { width: 26px; height: 26px; justify-content: flex-start; padding-left: 6px; }
.st { height: 24px; }
.first { margin-left: 27px; padding: 0 12px 0 11px; border-left: 1px solid #9b9b9e; }
.act { background: #fff; color: #217346; border-bottom: 2px solid #217346; border-left: 1px solid #9b9b9e; border-right: 1px solid #9b9b9e; padding: 0 11px; margin-top: -1px; height: 25px; }
.last { padding: 0 11px; border-right: 1px solid #9b9b9e; }
.plus { width: 82px; height: 26px; }
.sheetbar .dots { margin-left: auto; width: 32px; }
.scroll { flex: 0 0 349px; height: 15px; margin-top: 6px; border: 1px solid #a9a9ac; border-right: 0; background: #fff; }
.scroll button { width: 15px; height: 13px; border-right: 1px solid #a9a9ac; }

/* status bar */
.status { flex: none; height: 22px; display: flex; align-items: center; border-top: 1px solid #cbc6c1; }
.ready { margin-left: -13px; width: 24px; }
.rec { margin-left: 19px; }
.views { margin-left: auto; display: flex; align-self: stretch; }
.views button { width: 40px; }
.views .on { background: #d2cfce; }
.views .pb { width: 44px; padding-right: 4px; }

/* floating overlays */
.ime { position: absolute; right: 0; top: 119px; width: 32px; height: 58px; display: flex; align-items: center; background: #0a1330; border: 1px solid #2b447c; border-width: 3px 0; border-radius: 9px 0 0 9px; color: #fff; font-size: 15px; overflow: hidden; box-shadow: 0 2px 4px #0006; }
.ime span { margin-left: 5px; white-space: nowrap; }
.ring { position: absolute; left: 1133px; top: 558px; width: 62px; height: 62px; border: 5px solid #8fcbea99; border-radius: 50%; }
.cross { position: absolute; left: 1156px; top: 582px; }
```
